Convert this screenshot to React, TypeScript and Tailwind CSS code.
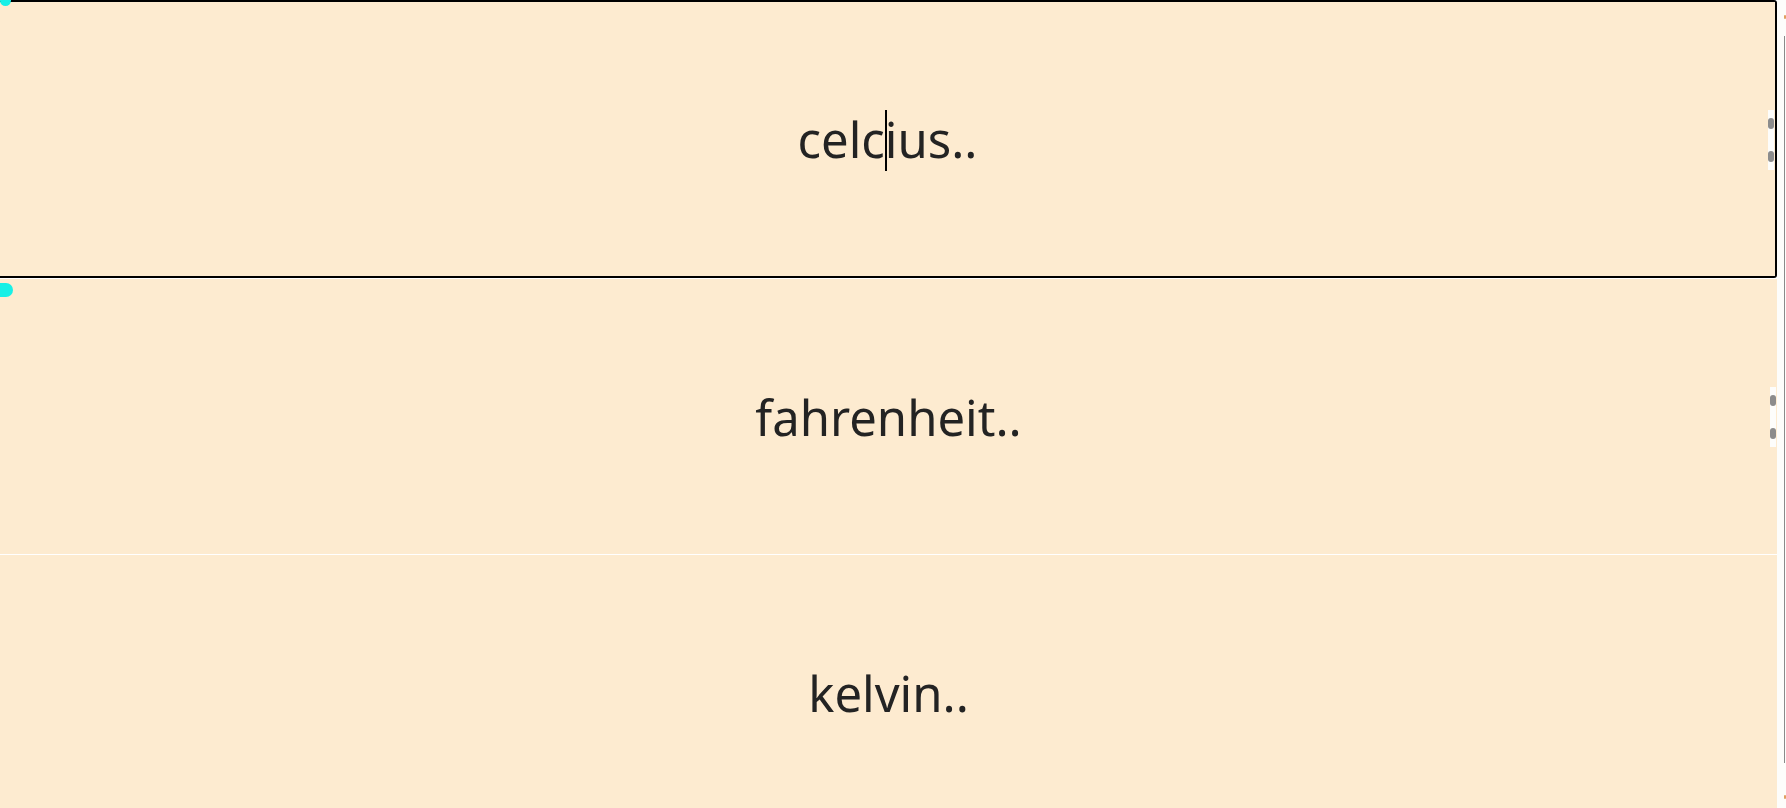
import React, { useState } from 'react';

const Field = ({ placeholder, value, onChange, focused, spinner }) => {
  return (
    <div
      className={
        'relative w-full shrink-0 ' +
        (focused
          ? 'h-[278px] border-t-2 border-r-2 border-b-2 border-black rounded-r-[3px]'
          : 'h-[275px]')
      }
    >
      <input
        type="text"
        value={value}
        placeholder={placeholder}
        onChange={(e) => onChange(e.target.value)}
        className="block w-full h-full bg-[#fdebd0] text-center text-[49px] text-[#232323] placeholder:text-[#232323] outline-none font-['Noto_Sans',sans-serif]"
      />
      {focused && value === '' && (
        <div className="absolute left-[885px] top-[108px] w-[2px] h-[61px] bg-black" />
      )}
      {spinner && (
        <div className="absolute right-[1px] top-[108px] w-[6px] h-[60px] bg-[#fdfdfb] flex flex-col justify-between py-[8px]">
          <div className="h-[11px] w-full rounded-[3px] bg-[#8c8c8c]" />
          <div className="h-[11px] w-full rounded-[3px] bg-[#8c8c8c]" />
        </div>
      )}
    </div>
  );
};

const App = () => {
  const [celcius, setCelcius] = useState('');
  const [fahrenheit, setFahrenheit] = useState('');
  const [kelvin, setKelvin] = useState('');

  return (
    <div className="relative h-[808px] overflow-hidden bg-white flex">
      <div className="w-[1777px] flex flex-col gap-px bg-white">
        <Field placeholder="celcius.." value={celcius} onChange={setCelcius} focused spinner />
        <Field placeholder="fahrenheit.." value={fahrenheit} onChange={setFahrenheit} spinner />
        <Field placeholder="kelvin.." value={kelvin} onChange={setKelvin} />
      </div>
      <div className="relative flex-1 bg-[#fdfdfb]">
        <div className="absolute right-[1px] top-[36px] h-[727px] w-px bg-[#8a8a8a]" />
        <div className="absolute right-0 top-[15px] h-[4px] w-[2px] rounded-full bg-[#e0a060]" />
        <div className="absolute right-0 top-[795px] h-[4px] w-[2px] rounded-full bg-[#e0a060]" />
      </div>
      {/* cyan cursor marks */}
      <div className="absolute left-0 top-0 w-[11px] h-[6px] rounded-b-full bg-[#18f0e6]" />
      <div className="absolute left-0 top-[283px] w-[13px] h-[14px] rounded-r-full bg-[#18f0e6]" />
    </div>
  );
};

export default App;
